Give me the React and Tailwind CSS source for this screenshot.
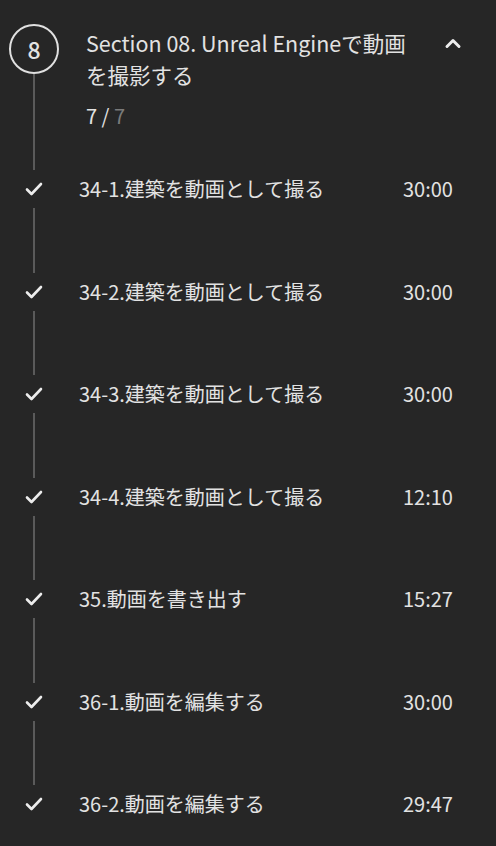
const lectures = [
  { title: '34-1.建築を動画として撮る', time: '30:00' },
  { title: '34-2.建築を動画として撮る', time: '30:00' },
  { title: '34-3.建築を動画として撮る', time: '30:00' },
  { title: '34-4.建築を動画として撮る', time: '12:10' },
  { title: '35.動画を書き出す', time: '15:27' },
  { title: '36-1.動画を編集する', time: '30:00' },
  { title: '36-2.動画を編集する', time: '29:47' },
]

function Check() {
  return (
    <svg width="18" height="14" viewBox="0 0 18 14" fill="none">
      <path d="M2 7.5l4.5 4.5L16 2" stroke="#ececec" strokeWidth="2.6" strokeLinecap="round" strokeLinejoin="round" />
    </svg>
  )
}

function Chevron() {
  return (
    <svg width="18" height="12" viewBox="0 0 18 12" fill="none">
      <path d="M3 9.5l6-6 6 6" stroke="#ececec" strokeWidth="3" strokeLinecap="round" strokeLinejoin="round" />
    </svg>
  )
}

export default function App() {
  return (
    <div
      className="w-[496px] h-[846px] overflow-hidden bg-[#262626] text-[#e2e2e2]"
      style={{ fontFamily: '"Noto Sans CJK JP", "Noto Sans", sans-serif' }}
    >
      {/* section header */}
      <div className="flex h-[170px]">
        <div className="w-[68px] flex flex-col items-center pt-6">
          <div className="w-[50px] h-[50px] rounded-full border-2 border-[#e0e0e0] flex items-center justify-center text-[23px] font-medium leading-none">
            8
          </div>
          <div className="flex-1 w-0.5 bg-[#5a5a5a]" />
        </div>
        <div className="flex-1 flex pl-[18px] pt-[27px] pr-[34px]">
          <div className="flex-1">
            <div className="text-[21.5px] leading-[32px]">Section 08. Unreal Engineで動画を撮影する</div>
            <div className="mt-[13px] text-[20px] leading-[24px]">
              7 / <span className="text-[#7a7a7a]">7</span>
            </div>
          </div>
          <div className="pt-[10px] pl-[30px]">
            <Chevron />
          </div>
        </div>
      </div>

      {/* lectures */}
      {lectures.map((l, i) => (
        <div key={i} className="flex flex-col h-[102.5px]">
          <div className="flex items-center h-[38px]">
            <div className="w-[68px] flex justify-center">
              <Check />
            </div>
            <div className="flex-1 pl-[11px] text-[20px]">{l.title}</div>
            <div className="w-[93px] text-[20px]">{l.time}</div>
          </div>
          {i < lectures.length - 1 && (
            <div className="w-[68px] flex justify-center flex-1">
              <div className="w-0.5 bg-[#5a5a5a]" />
            </div>
          )}
        </div>
      ))}
    </div>
  )
}
